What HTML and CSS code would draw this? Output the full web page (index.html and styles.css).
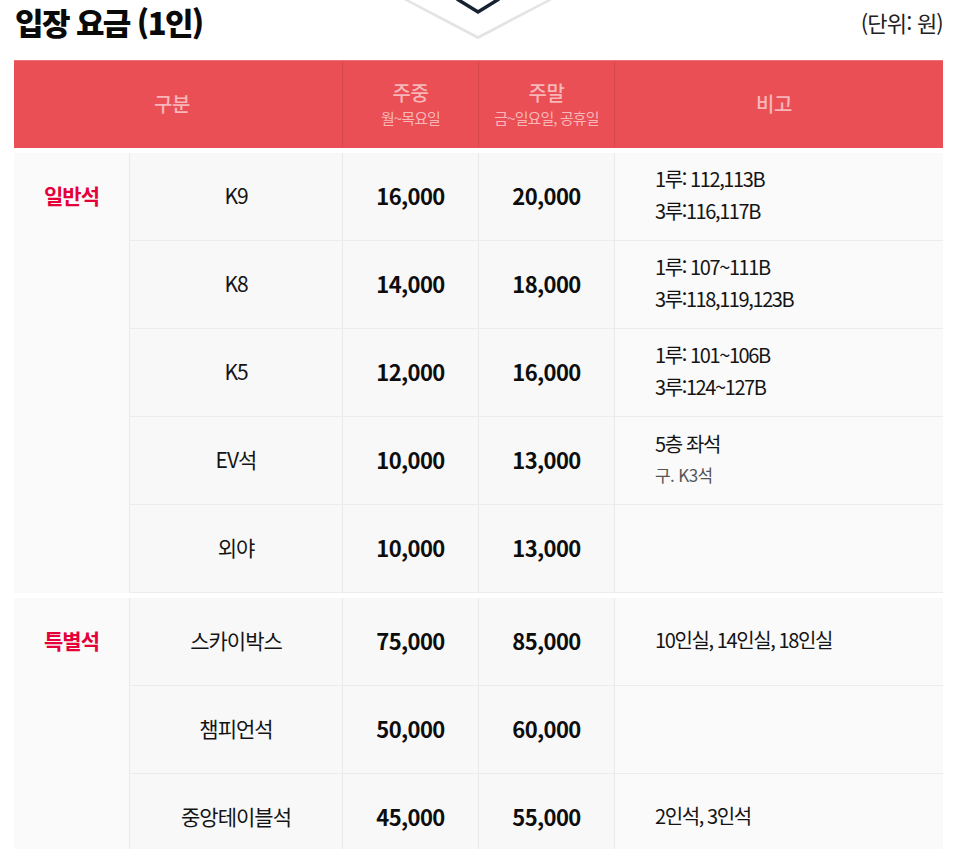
FILE: index.html
```html
<!DOCTYPE html>
<html lang="ko">
<head>
<meta charset="utf-8">
<title>입장 요금</title>
<link rel="stylesheet" href="styles.css">
</head>
<body>
<div class="page">
  <svg class="deco" width="150" height="42" viewBox="403 0 150 42" aria-hidden="true">
    <polyline points="405,-1 478,37.5 551,-1" fill="none" stroke="#e4e4e4" stroke-width="3"/>
    <polygon points="407,-1 478,35.5 549,-1" fill="#ffffff"/>
    <polyline points="457,-1 478,12 499,-1" fill="none" stroke="#172231" stroke-width="3.5" stroke-linejoin="miter"/>
  </svg>

  <div class="page-head">
    <h1 class="title">입장 요금 (1인)</h1>
    <span class="unit">(단위: 원)</span>
  </div>

  <div class="fee-table">
    <div class="thead">
      <div class="th th-first">구분</div>
      <div class="th"><span class="th-main">주중</span><span class="th-sub">월~목요일</span></div>
      <div class="th"><span class="th-main">주말</span><span class="th-sub">금~일요일, 공휴일</span></div>
      <div class="th">비고</div>
    </div>

    <div class="group group-5">
      <div class="cat"><div class="cat-label">일반석</div></div>
      <div class="row">
        <div class="td name">K9</div>
        <div class="td price">16,000</div>
        <div class="td price">20,000</div>
        <div class="td note"><span>1루: 112,113B</span><span>3루:116,117B</span></div>
      </div>
      <div class="row">
        <div class="td name">K8</div>
        <div class="td price">14,000</div>
        <div class="td price">18,000</div>
        <div class="td note"><span>1루: 107~111B</span><span>3루:118,119,123B</span></div>
      </div>
      <div class="row">
        <div class="td name">K5</div>
        <div class="td price">12,000</div>
        <div class="td price">16,000</div>
        <div class="td note"><span>1루: 101~106B</span><span>3루:124~127B</span></div>
      </div>
      <div class="row">
        <div class="td name">EV석</div>
        <div class="td price">10,000</div>
        <div class="td price">13,000</div>
        <div class="td note"><span>5층 좌석</span><span class="note-sub">구. K3석</span></div>
      </div>
      <div class="row">
        <div class="td name">외야</div>
        <div class="td price">10,000</div>
        <div class="td price">13,000</div>
        <div class="td note"></div>
      </div>
    </div>

    <div class="group group-3">
      <div class="cat"><div class="cat-label">특별석</div></div>
      <div class="row">
        <div class="td name">스카이박스</div>
        <div class="td price">75,000</div>
        <div class="td price">85,000</div>
        <div class="td note"><span>10인실, 14인실, 18인실</span></div>
      </div>
      <div class="row">
        <div class="td name">챔피언석</div>
        <div class="td price">50,000</div>
        <div class="td price">60,000</div>
        <div class="td note"></div>
      </div>
      <div class="row">
        <div class="td name">중앙테이블석</div>
        <div class="td price">45,000</div>
        <div class="td price">55,000</div>
        <div class="td note"><span>2인석, 3인석</span></div>
      </div>
    </div>
  </div>
</div>
</body>
</html>
```

FILE: styles.css
```css
* {
  box-sizing: border-box;
}

html, body {
  margin: 0;
  padding: 0;
  background: #ffffff;
}

body {
  font-family: "Noto Sans CJK KR", "Noto Sans", sans-serif;
  color: #111111;
  overflow: hidden;
}

.page {
  position: relative;
  width: 955px;
}

.deco {
  position: absolute;
  left: 403px;
  top: 0;
  display: block;
}

.page-head {
  display: flex;
  justify-content: space-between;
  align-items: flex-start;
  height: 60px;
  padding: 0 12px 0 15px;
}

.title {
  margin: 0;
  font-size: 31px;
  line-height: 44px;
  font-weight: 900;
  letter-spacing: -1.6px;
  color: #0a0a0a;
}

.unit {
  font-size: 22px;
  line-height: 44px;
  letter-spacing: -0.8px;
  color: #222222;
}

.fee-table {
  width: 929px;
  margin-left: 14px;
}

.thead {
  display: grid;
  grid-template-columns: 328px 136px 136px 329px;
  height: 88px;
  background: #e94f55;
  border-top: 1px solid #ef7175;
}

.th {
  display: flex;
  flex-direction: column;
  justify-content: center;
  align-items: center;
  color: #f8b6b8;
  font-size: 20px;
  font-weight: 500;
  letter-spacing: -0.5px;
  border-left: 1px solid #d9474d;
  padding-bottom: 3px;
}

.th-first {
  border-left: none;
  padding-right: 12px;
}

.th:last-child {
  padding-right: 10px;
}

.th-main {
  line-height: 29px;
}

.th-sub {
  font-size: 15px;
  line-height: 22px;
  font-weight: 400;
  letter-spacing: -0.9px;
}

.group {
  display: grid;
  grid-template-columns: 115px 213px 136px 136px 329px;
  grid-auto-rows: 88px;
  margin-top: 5px;
}

.group-5 .cat {
  grid-row: 1 / span 5;
}

.group-3 .cat {
  grid-row: 1 / span 3;
}

.cat {
  grid-column: 1;
  background: #fafafa;
}

.cat-label {
  height: 87px;
  padding-bottom: 3px;
  display: flex;
  align-items: center;
  justify-content: center;
  color: #e5003a;
  font-size: 21px;
  font-weight: 700;
  letter-spacing: -1px;
}

.row {
  display: contents;
}

.td {
  display: flex;
  align-items: center;
  justify-content: center;
  background: #f8f8f8;
  border-left: 1px solid #e9e9e9;
  border-bottom: 1px solid #ececec;
  padding-bottom: 3px;
}

.name {
  font-size: 21px;
  letter-spacing: -1px;
  font-weight: 400;
  color: #141414;
}

.price {
  font-size: 22px;
  font-weight: 700;
  letter-spacing: -0.6px;
  color: #0d0d0d;
}

.note {
  flex-direction: column;
  align-items: flex-start;
  justify-content: center;
  padding-left: 40px;
  background: #fafafa;
  font-size: 20px;
  letter-spacing: -1.4px;
  line-height: 32px;
  color: #141414;
}

.note-sub {
  font-size: 17px;
  letter-spacing: -0.6px;
  color: #555555;
  line-height: 30px;
}
```
